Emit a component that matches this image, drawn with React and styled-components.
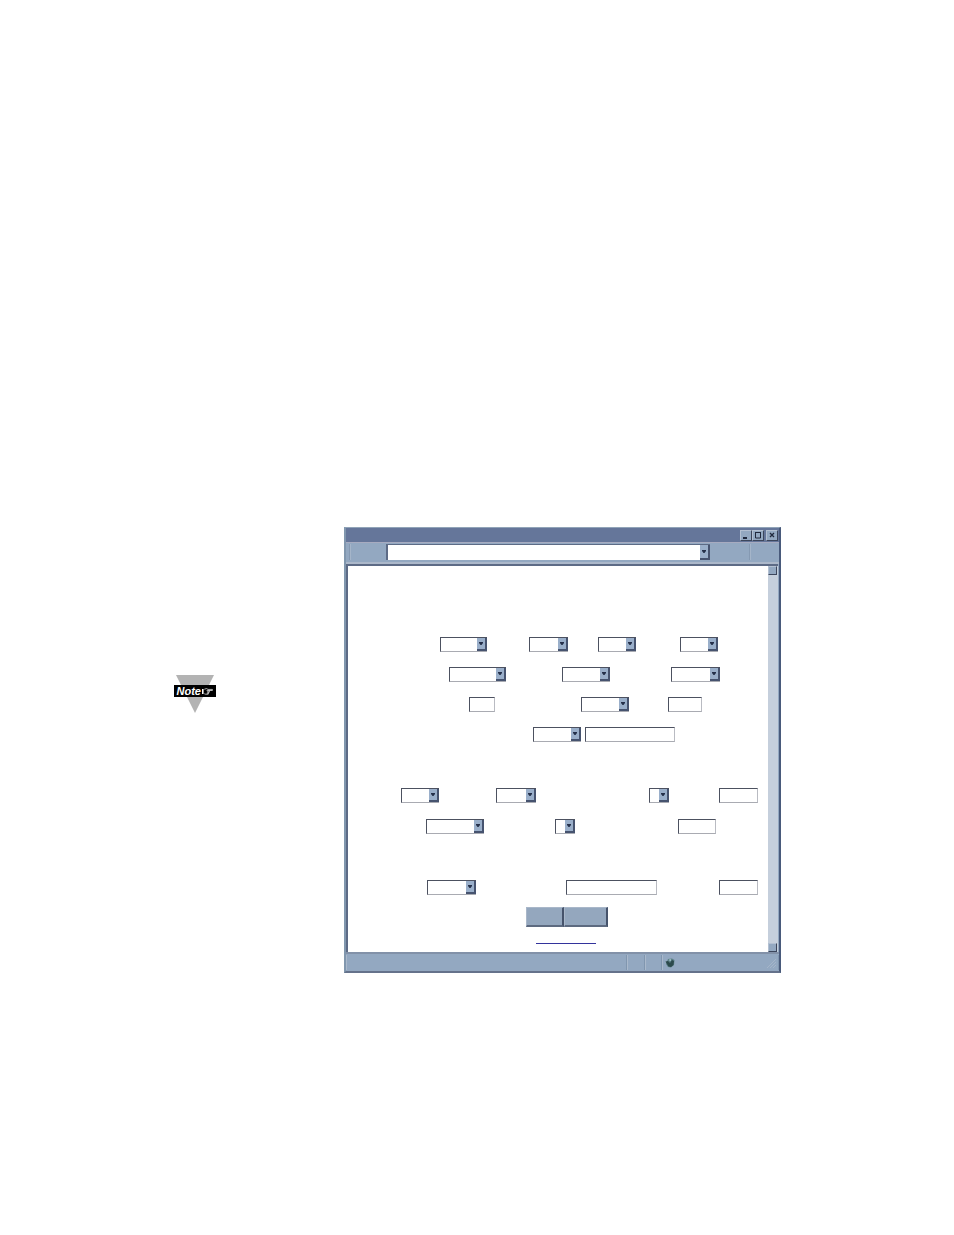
import React from 'react';
import styled, { createGlobalStyle, css, ThemeProvider } from 'styled-components';

const theme = {
  face: '#93a8c1',
  light: '#b3c0d2',
  shade: '#5d6b86',
  dark: '#3c465c',
  title: '#65769a',
};

const rows = [
  {
    id: 'first',
    fields: [
      { type: 'select', gap: 92, width: 47 },
      { type: 'select', gap: 42, width: 39 },
      { type: 'select', gap: 30, width: 38 },
      { type: 'select', gap: 44, width: 38 },
    ],
  },
  {
    id: 'second',
    fields: [
      { type: 'select', gap: 101, width: 57 },
      { type: 'select', gap: 56, width: 48 },
      { type: 'select', gap: 61, width: 49 },
    ],
  },
  {
    id: 'third',
    fields: [
      { type: 'text', gap: 121, width: 26 },
      { type: 'select', gap: 86, width: 48 },
      { type: 'text', gap: 39, width: 34 },
    ],
  },
  {
    id: 'fourth',
    fields: [
      { type: 'select', gap: 185, width: 48 },
      { type: 'text', gap: 4, width: 90 },
    ],
  },
  {
    id: 'fifth',
    space: 46,
    fields: [
      { type: 'select', gap: 53, width: 38 },
      { type: 'select', gap: 57, width: 40 },
      { type: 'select', gap: 113, width: 20 },
      { type: 'text', gap: 50, width: 39 },
    ],
  },
  {
    id: 'sixth',
    space: 16,
    fields: [
      { type: 'select', gap: 78, width: 58 },
      { type: 'select', gap: 71, width: 20 },
      { type: 'text', gap: 103, width: 38 },
    ],
  },
  {
    id: 'seventh',
    space: 46,
    fields: [
      { type: 'select', gap: 79, width: 49 },
      { type: 'text', gap: 90, width: 91 },
      { type: 'text', gap: 62, width: 39 },
    ],
  },
];

const Arrow = () => (
  <ArrowButton aria-hidden="true">
    <svg width="4" height="3" viewBox="0 0 4 3">
      <path d="M0 0h4v1L2.5 3h-1L0 1z" fill="#25304a" />
    </svg>
  </ArrowButton>
);

const Field = ({ type, gap, width, label }) =>
  type === 'select' ? (
    <SelectBox $gap={gap} $width={width}>
      <Select aria-label={label} />
      <Arrow />
    </SelectBox>
  ) : (
    <TextInput type="text" aria-label={label} $gap={gap} $width={width} />
  );

const NoteBadge = () => (
  <Badge>
    <svg width="38" height="38" viewBox="0 0 38 38" aria-hidden="true">
      <path d="M0 0h38L19 38z" fill="#b3b3b3" />
    </svg>
    <BadgeLabel>
      Note
      <svg width="11" height="7" viewBox="0 0 11 7" aria-hidden="true">
        <path d="M0 1h1.6v5H0z" fill="#fff" />
        <path
          d="M2.3 1.2L4.6 0.6L6 1.4H10.4V2.5H6.6M7.4 2.6V3.8H6.8V5H6.2V6.2H3.6L2.3 5.8M4.6 2.6H7M5 3.9H6.8M4.8 5.1H6.2"
          fill="none"
          stroke="#fff"
          strokeWidth="0.7"
        />
      </svg>
    </BadgeLabel>
  </Badge>
);

const App = () => (
  <ThemeProvider theme={theme}>
    <GlobalStyle />
    <Page>
      <Aside>
        <NoteBadge />
      </Aside>
      <Window>
        <TitleBar>
          <TitleButton type="button" aria-label="Minimize">
            <svg width="8" height="8" viewBox="0 0 8 8">
              <path d="M1 6h4v2H1z" fill="#20293d" />
            </svg>
          </TitleButton>
          <TitleButton type="button" aria-label="Maximize">
            <svg width="8" height="8" viewBox="0 0 8 8">
              <path d="M1 1.5h6M1.5 1v6h5V1" fill="none" stroke="#20293d" />
            </svg>
          </TitleButton>
          <TitleButton type="button" aria-label="Close" $apart>
            <svg width="8" height="8" viewBox="0 0 8 8">
              <path d="M2 2l4 4M6 2l-4 4" stroke="#20293d" strokeWidth="1.3" />
            </svg>
          </TitleButton>
        </TitleBar>
        <Toolbar>
          <Grip />
          <AddressBox>
            <AddressInput type="text" aria-label="Address" />
            <Arrow />
          </AddressBox>
          <ToolbarEnd>
            <Grip />
          </ToolbarEnd>
        </Toolbar>
        <Body>
          <Form onSubmit={(e) => e.preventDefault()}>
            {rows.map(({ id, space, fields }) => (
              <Row key={id} $space={space}>
                {fields.map((field, i) => (
                  <Field key={i} label={`${id} row, field ${i + 1}`} {...field} />
                ))}
              </Row>
            ))}
            <Actions>
              <ActionButton type="submit" aria-label="Save" $width={38} />
              <ActionButton type="reset" aria-label="Reset" $width={44} />
            </Actions>
            <MenuLink href="#menu" aria-label="Main menu" />
          </Form>
          <Scrollbar>
            <ScrollButton type="button" aria-label="Scroll up" />
            <ScrollButton type="button" aria-label="Scroll down" />
          </Scrollbar>
        </Body>
        <StatusBar>
          <StatusPane />
          <StatusPane $width={18} />
          <StatusPane $width={17} />
          <StatusPane $width={117}>
            <svg width="10" height="10" viewBox="0 0 10 10" aria-hidden="true">
              <path d="M3 1l4-0.5L9.5 2L9 7L6 9.5L3 9L1 6z" fill="#5c8087" />
              <path d="M0.5 3.5L3 3l2 2 2-3 2 1-0.5 4L6 9 3.5 8.5z" fill="#2c4a4c" />
              <path d="M4 1.5l2-0.5v2L4.5 3z" fill="#9dbcc2" />
            </svg>
            <svg width="9" height="10" viewBox="0 0 9 10" aria-hidden="true">
              <path d="M0 10L9 1M3 10l6-6M6 10l3-3" stroke="#a5b5c9" />
            </svg>
          </StatusPane>
        </StatusBar>
      </Window>
    </Page>
  </ThemeProvider>
);

const GlobalStyle = createGlobalStyle`
  * {
    box-sizing: border-box;
  }

  body {
    margin: 0;
    background: #fff;
    font-family: 'Liberation Sans', Arial, sans-serif;
  }

  svg {
    display: block;
    flex: none;
  }

  button,
  input,
  select {
    margin: 0;
    padding: 0;
    border: 0;
    border-radius: 0;
    outline: none;
    font: inherit;
    font-size: 10px;
  }
`;

const Page = styled.main`
  display: grid;
  grid-template-columns: 344fr 437fr 173fr;
  align-items: start;
  min-height: 100vh;
  padding: 527px 0 262px;
`;

const Aside = styled.aside`
  display: flex;
  justify-content: flex-end;
  padding: 148px 128px 0 0;
`;

const Badge = styled.div`
  display: grid;
  justify-items: center;

  > * {
    grid-area: 1 / 1;
  }
`;

const BadgeLabel = styled.strong`
  display: flex;
  align-items: center;
  gap: 1px;
  height: 12px;
  margin-top: 10px;
  padding: 0 3px;
  background: #000;
  color: #fff;
  font-size: 11px;
  font-style: italic;
  line-height: 12px;
`;

const Window = styled.section`
  display: flex;
  flex-direction: column;
  min-width: 437px;
  border-style: solid;
  border-width: 1px 2px 2px;
  border-color: #91a4b8 #495a7b #65728b #8197ae;
  background: ${({ theme }) => theme.face};
`;

const TitleBar = styled.header`
  display: flex;
  align-items: center;
  justify-content: flex-end;
  height: 14px;
  padding-right: 1px;
  background: ${({ theme }) => theme.title};
`;

const raised = css`
  border-style: solid;
  border-width: 1px;
  border-color: ${({ theme }) =>
    `${theme.light} ${theme.dark} ${theme.dark} ${theme.light}`};
  background: ${({ theme }) => theme.face};
`;

const TitleButton = styled.button`
  ${raised}
  display: flex;
  align-items: center;
  justify-content: center;
  width: 12px;
  height: 11px;
  margin-left: ${({ $apart }) => ($apart ? 2 : 0)}px;
`;

const Toolbar = styled.div`
  display: flex;
  align-items: flex-start;
  height: 22px;
  padding: 1px 0 0 3px;
  border-top: 1px solid #a7abc0;
  border-bottom: 2px solid #acb8ca;
`;

const Grip = styled.span`
  width: 2px;
  height: 16px;
  border-left: 1px solid #8599b2;
  border-right: 1px solid #a5b5c9;
`;

const AddressBox = styled.div`
  display: flex;
  flex: 1;
  height: 16px;
  margin-left: 35px;
  border-top: 1px solid ${({ theme }) => theme.shade};
  border-left: 2px solid ${({ theme }) => theme.shade};
  background: #fff;
`;

const AddressInput = styled.input`
  flex: 1;
  min-width: 0;
  background: transparent;
`;

const ToolbarEnd = styled.div`
  display: flex;
  width: 69px;
  padding-left: 39px;
`;

const ArrowButton = styled.span`
  display: flex;
  align-items: center;
  justify-content: center;
  flex: none;
  width: 10px;
  border-style: solid;
  border-width: 0 2px 2px 0;
  border-color: #46536f;
  background: #9aafca;
  pointer-events: none;
`;

const Body = styled.div`
  display: flex;
  margin-right: 1px;
  border-top: 2px solid ${({ theme }) => theme.shade};
  border-left: 2px solid ${({ theme }) => theme.shade};
  background: #fff;
`;

const Form = styled.form`
  display: flex;
  flex: 1;
  flex-direction: column;
  min-width: 0;
  padding: 56px 0 8px;
`;

const Row = styled.div`
  display: flex;
  margin-top: ${({ $space = 15 }) => $space}px;
`;

const sunken = css`
  flex: none;
  width: ${({ $width }) => $width}px;
  height: 15px;
  margin-left: ${({ $gap }) => $gap}px;
  border-style: solid;
  border-width: 1px;
  border-color: #4c5160 #b9bbc2 #a9abb2 #4c5160;
  background: #fff;
`;

const SelectBox = styled.div`
  ${sunken}
  display: flex;
  border-right: 0;
`;

const Select = styled.select`
  flex: 1;
  min-width: 0;
  appearance: none;
  background: transparent;
`;

const TextInput = styled.input`
  ${sunken}
`;

const Actions = styled.div`
  display: flex;
  margin: 12px 0 0 178px;
`;

const ActionButton = styled.button`
  width: ${({ $width }) => $width}px;
  height: 20px;
  border-style: solid;
  border-width: 1px 2px 2px 1px;
  border-color: #a9b7c9 #46536b #5d6a80 #a9b7c9;
  background: #94a7be;
`;

const MenuLink = styled.a`
  width: 60px;
  height: 17px;
  margin-left: 188px;
  border-bottom: 1px solid #33339c;
`;

const Scrollbar = styled.div`
  display: flex;
  flex-direction: column;
  justify-content: space-between;
  width: 10px;
  background: #c5cfdc;
`;

const ScrollButton = styled.button`
  ${raised}
  width: 9px;
  height: 9px;
`;

const StatusBar = styled.footer`
  display: flex;
  height: 19px;
  padding-top: 1px;
  border-top: 2px solid #8291a8;
`;

const StatusPane = styled.div`
  display: flex;
  align-items: center;
  justify-content: space-between;
  flex: ${({ $width }) => ($width ? 'none' : 1)};
  width: ${({ $width }) => ($width ? `${$width}px` : 'auto')};
  height: 15px;
  padding: 0 2px;
  border-left: 1px solid #aab9cc;
  border-right: 1px solid #8096af;
`;

export default App;
